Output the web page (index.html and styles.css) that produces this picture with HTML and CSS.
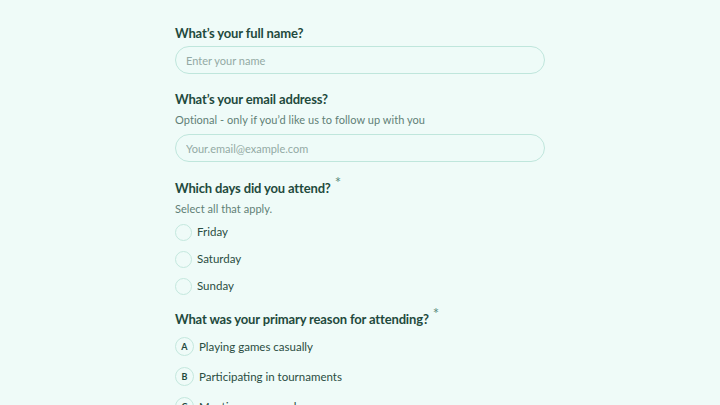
FILE: index.html
```html
<!DOCTYPE html>
<html lang="en">
<head>
<meta charset="UTF-8">
<title>Event feedback</title>
<link rel="stylesheet" href="styles.css">
</head>
<body>
<form class="survey">
	<div class="field">
		<label class="question" for="name">What’s your full name?</label>
		<input class="text-input" id="name" type="text" placeholder="Enter your name">
	</div>
	<div class="field">
		<label class="question" for="email">What’s your email address?</label>
		<div class="hint">Optional - only if you’d like us to follow up with you</div>
		<input class="text-input" id="email" type="email" placeholder="Your.email@example.com">
	</div>
	<div class="field">
		<div class="question">Which days did you attend? <span class="req">*</span></div>
		<div class="hint">Select all that apply.</div>
		<div class="checks">
			<label class="check"><span class="circle"></span>Friday</label>
			<label class="check"><span class="circle"></span>Saturday</label>
			<label class="check"><span class="circle"></span>Sunday</label>
		</div>
	</div>
	<div class="field reason">
		<div class="question">What was your primary reason for attending? <span class="req">*</span></div>
		<div class="choices">
			<label class="choice"><span class="key">A</span>Playing games casually</label>
			<label class="choice"><span class="key">B</span>Participating in tournaments</label>
			<label class="choice"><span class="key">C</span>Meeting new people</label>
		</div>
	</div>
</form>
</body>
</html>
```

FILE: styles.css
```css
html, body {
	margin: 0;
	padding: 0;
	background: #effbf8;
	font-family: Lato, "Noto Sans", sans-serif;
	color: #1f4a3d;
}
.survey {
	width: 370px;
	margin: 0 auto;
	padding-top: 24px;
	display: flex;
	flex-direction: column;
	gap: 16px;
}
.field {
	display: flex;
	flex-direction: column;
}
.reason {
	margin-top: -2px;
}
.question {
	font-size: 13px;
	font-weight: 700;
	line-height: 18px;
	letter-spacing: -0.15px;
	color: #1f4a3d;
	margin-bottom: 4px;
}
.req {
	color: #5a8a7c;
	font-weight: 400;
	font-size: 15px;
	position: relative;
	top: -5px;
	margin-left: 1px;
}
.hint {
	font-size: 11px;
	letter-spacing: 0.05px;
	color: #5f7f76;
	line-height: 16px;
	margin-bottom: 6px;
}
.text-input {
	box-sizing: border-box;
	height: 28px;
	border: 1px solid #bfe6dc;
	border-radius: 14px;
	background: #eefbf8;
	padding: 0 10px;
	font-family: inherit;
	font-size: 11px;
	color: #1f4a3d;
	outline: none;
}
.text-input::placeholder {
	color: #93aaa4;
}
.checks {
	display: flex;
	flex-direction: column;
	gap: 9px;
}
.check, .choice {
	display: flex;
	align-items: center;
	font-size: 11.5px;
	color: #2a4d42;
	line-height: 18px;
}
.circle {
	width: 15px;
	height: 15px;
	border: 1px solid #c4e8de;
	border-radius: 50%;
	margin-right: 5px;
}
.choices {
	display: flex;
	flex-direction: column;
	gap: 11px;
	margin-top: 5px;
}
.key {
	box-sizing: border-box;
	width: 19px;
	height: 19px;
	border: 1px solid #c4e8de;
	border-radius: 50%;
	display: flex;
	align-items: center;
	justify-content: center;
	font-size: 9px;
	font-weight: 700;
	color: #1f4a3d;
	margin-right: 5px;
}
```
